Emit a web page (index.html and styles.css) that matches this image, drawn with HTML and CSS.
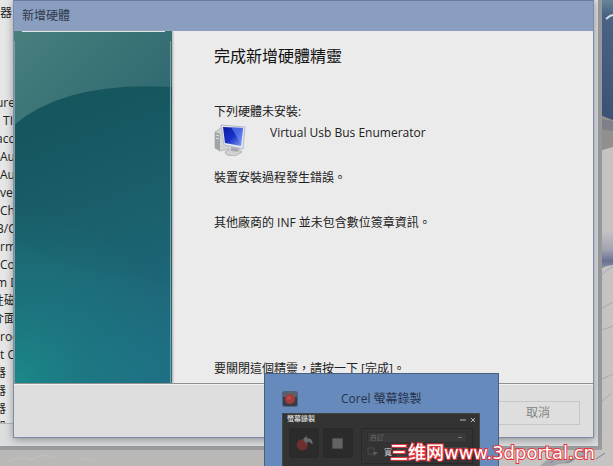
FILE: index.html
```html
<!DOCTYPE html>
<html lang="zh-Hant">
<head>
    <meta charset="UTF-8">
    <meta name="viewport" content="width=device-width, initial-scale=1.0">
    <title>新增硬體</title>
    <link rel="stylesheet" href="styles.css">
</head>
<body>
<div class="desktop">
    <!-- wallpaper -->
    <svg class="wallpaper" viewBox="0 0 613 466" preserveAspectRatio="xMaxYMax slice" aria-hidden="true">
        <defs>
            <linearGradient id="sky" x1="0" y1="0" x2="0" y2="1">
                <stop offset="0" stop-color="#66859a"/>
                <stop offset=".12" stop-color="#4a6384"/>
                <stop offset="1" stop-color="#3c5275"/>
            </linearGradient>
            <linearGradient id="haze" x1="0" y1="0" x2="0" y2="1">
                <stop offset="0" stop-color="#c6c4c2"/>
                <stop offset=".5" stop-color="#a2a3b1"/>
                <stop offset=".8" stop-color="#686f91"/>
                <stop offset="1" stop-color="#9497aa"/>
            </linearGradient>
        </defs>
        <rect width="613" height="466" fill="#c6c4c2"/>
        <rect x="600" width="13" height="120" fill="url(#sky)"/>
        <path d="M606 19l4-3 3-1" stroke="#d5dee3" stroke-width="2" fill="none"/>
        <path d="M600 115l13 5v27l-7 2-6 2z" fill="#92908f"/>
        <path d="M600 119l13 2v10l-13-2z" fill="#7e8089"/>
        <path d="M600 232l13-2v35l-6 1-7 3z" fill="url(#haze)"/>
        <path d="M602 275q4-6 11-8M602 308l11-6M602 330l11-4M602 379l11-5M602 401l9-7" stroke="#aaa9a9" fill="none"/>
        <path d="M540 466l8-7 7 2 5-5 6 3 8-2 4-7 9-3 5 2-5 6-9 2-8 6-11 1-6 2z" fill="#a3a4aa"/>
        <path d="M550 463l6-4m10 4l9-4m8-8l10-4m3 12l9-6" stroke="#7d808a" fill="none"/>
        <path d="M0 450h264v16H0z" fill="#b9b8b7"/>
        <path d="M8 461l14-4 9 3 12-5 14 3M82 458l13 3" stroke="#bebdbc" stroke-width="2" fill="none"/>
    </svg>

    <!-- device list behind the wizard -->
    <section class="back-window">
        <ul class="device-list">
            <li>器</li>
            <li></li>
            <li></li>
            <li></li>
            <li></li>
            <li class="cut">ure</li>
            <li>&nbsp;TII</li>
            <li class="cut">acc</li>
            <li>Au</li>
            <li>Au</li>
            <li>ve</li>
            <li>Ch</li>
            <li class="cut">B/C</li>
            <li>rm</li>
            <li>Co</li>
            <li class="cut">m D</li>
            <li class="half">性磁</li>
            <li class="half">介面</li>
            <li>roc</li>
            <li>t C</li>
            <li class="half">器</li>
            <li class="half">器</li>
            <li class="half">器</li>
            <li class="half">器</li>
        </ul>
    </section>

    <!-- wizard -->
    <section class="wizard">
        <header class="wizard-title">新增硬體</header>
        <div class="wizard-body">
            <svg class="banner" viewBox="0 0 159 352" preserveAspectRatio="none" aria-hidden="true">
                <defs>
                    <linearGradient id="top" x1="0" y1="0" x2="1" y2="1">
                        <stop offset="0" stop-color="#47807d"/>
                        <stop offset="1" stop-color="#265e6b"/>
                    </linearGradient>
                    <linearGradient id="sea" x1=".3" y1="0" x2=".5" y2="1">
                        <stop offset="0" stop-color="#15545b"/>
                        <stop offset=".5" stop-color="#1a606c"/>
                        <stop offset="1" stop-color="#1f6b82"/>
                    </linearGradient>
                    <radialGradient id="glow" gradientUnits="userSpaceOnUse" cx="5" cy="350" r="170">
                        <stop offset="0" stop-color="#1b8789"/>
                        <stop offset=".4" stop-color="#1b8284" stop-opacity=".5"/>
                        <stop offset="1" stop-color="#1b8284" stop-opacity="0"/>
                    </radialGradient>
                </defs>
                <rect width="159" height="160" fill="url(#top)"/>
                <path d="M0 94Q52 50 159 56V352H0z" fill="url(#sea)"/>
                <path d="M0 207Q38 239 159 252V352H0z" fill="#268290" opacity=".1"/>
                <rect width="159" height="352" fill="url(#glow)"/>
                <path d="M8 0.5H152" stroke="#dce9ea"/>
                <path d="M0.5 10V352M157.5 10V352" stroke="#7ca0a5"/>
            </svg>
            <main class="wizard-content">
                <h1>完成新增硬體精靈</h1>
                <p>下列硬體未安裝:</p>
                <div class="device">
                    <svg class="computer" viewBox="0 0 32 32" aria-hidden="true">
                        <defs>
                            <linearGradient id="screen" x1="0" y1="0" x2="1" y2="1">
                                <stop offset="0" stop-color="#0a1a9c"/>
                                <stop offset=".5" stop-color="#1730c8"/>
                                <stop offset="1" stop-color="#8ba7f3"/>
                            </linearGradient>
                        </defs>
                        <path d="M1 8l7-5 7 2v20L6 27l-5-3z" fill="#d0d2d2" stroke="#b6b9ba"/>
                        <path d="M1 8l5 2v17l-5-3z" fill="#a0a4a5"/>
                        <path d="M2 11l3 1M2 14l3 1" stroke="#e2e6e6"/>
                        <path d="M11 28l6-3 9 1 2 2-7 4-8-1z" fill="#d0d2d4" stroke="#b0b3b6"/>
                        <path d="M17 23l8 1-1 4-7-1z" fill="#a8abad"/>
                        <path d="M7 1l24 2-2 22-19-4z" fill="#e3e6ef" stroke="#b4bacb"/>
                        <path d="M9 3l20 1-2 18-16-3z" fill="url(#screen)"/>
                        <path d="M17 3l12 1-2 16z" fill="#7598ff" opacity=".55"/>
                    </svg>
                    <span>Virtual Usb Bus Enumerator</span>
                </div>
                <p class="result">裝置安裝過程發生錯誤。</p>
                <p class="reason">其他廠商的 INF 並未包含數位簽章資訊。</p>
                <p class="hint">要關閉這個精靈，請按一下 [完成]。</p>
            </main>
        </div>
        <footer class="wizard-footer">
            <button class="cancel" type="button" disabled>取消</button>
        </footer>
    </section>

    <!-- taskbar preview of the recorder -->
    <section class="preview">
        <header class="preview-title">
            <svg class="app-icon" viewBox="0 0 16 16" aria-hidden="true">
                <rect x="0.5" y="0.5" width="15" height="15" rx="2" fill="#363d49" stroke="#54627c"/>
                <rect x="1" y="1" width="14" height="5" rx="1" fill="#59616e"/>
                <circle cx="8" cy="8" r="5" fill="#a33b3c"/>
                <circle cx="7" cy="7" r="2" fill="#b84a49"/>
            </svg>
            <span>Corel 螢幕錄製</span>
        </header>
        <div class="recorder">
            <div class="recorder-bar">
                <span>螢幕錄製</span>
                <svg viewBox="0 0 20 8" aria-hidden="true">
                    <path d="M1 4h6M12 2l4 4M16 2l-4 4" stroke="#b9b9b9" fill="none"/>
                </svg>
            </div>
            <div class="recorder-body">
                <button class="tool" type="button" aria-label="錄製">
                    <svg viewBox="0 0 30 30" aria-hidden="true">
                        <circle cx="13" cy="17" r="6" fill="#6c3031"/>
                        <path d="M14 11l4-4v3q7-1 6 7-2-4-6-3v3z" fill="#686a6b"/>
                    </svg>
                </button>
                <button class="tool" type="button" aria-label="停止">
                    <svg viewBox="0 0 30 30" aria-hidden="true">
                        <rect x="9" y="10" width="11" height="11" fill="#626262"/>
                    </svg>
                </button>
                <div class="options">
                    <select aria-label="大小">
                        <option>自訂</option>
                    </select>
                    <div class="size-row">
                        <svg viewBox="0 0 12 10" aria-hidden="true">
                            <path d="M1 1h6v6H1z" stroke="#4c4c4c" fill="none"/>
                            <path d="M6 5h5l-4 4z" fill="#5c5c5c"/>
                        </svg>
                        <label for="rec-width">寬</label>
                        <input id="rec-width" type="text">
                    </div>
                </div>
            </div>
        </div>
    </section>

    <div class="watermark"><span>三维网</span><a href="#">www.3dportal.cn</a></div>
</div>
</body>
</html>
```

FILE: styles.css
```css
* {
    box-sizing: border-box;
}
body {
    margin: 0;
    font-family: "Open Sans", "Noto Sans CJK TC", sans-serif;
    font-size: 12px;
    line-height: 18px;
    color: #222;
}
h1, p, ul {
    margin: 0;
    padding: 0;
}
.desktop {
    position: relative;
    height: 100vh;
    overflow: hidden;
    background: #c6c4c2;
}
.wallpaper {
    position: absolute;
    width: 100%;
    height: 100%;
}

/* window behind */
.back-window {
    position: absolute;
    inset: 0 11px 16px 0;
    padding: 0 8px 22px 0;
    background: #dcdddf;
    border-right: 4px solid #999b9e;
    border-bottom: 4px solid #999b9c;
}
.device-list {
    height: 100%;
    padding-top: 4px;
    overflow: hidden;
    list-style: none;
    white-space: nowrap;
    background: #e6e6e7;
    border-bottom: 1px solid #b6b8bd;
}
.device-list li {
    height: 18px;
}
.device-list .cut {
    margin-left: -4px;
}
.device-list .half {
    margin-left: -6px;
}
.device-list .half:nth-child(17),
.device-list .half:nth-child(18) {
    margin-left: -8px;
}

/* wizard */
.wizard {
    position: absolute;
    inset: 0 19px 28px 13px;
    display: flex;
    flex-direction: column;
    background: #ebebeb;
    border: 1px solid #7c8ba9;
    border-top-color: #6b7d9f;
    box-shadow: 0 2px 8px rgba(0, 0, 0, 0.35);
}
.wizard-title {
    height: 30px;
    padding: 6px 8px;
    color: #303a4e;
    background: #8a9fc0;
}
.wizard-body {
    display: flex;
    flex: 1;
    min-height: 0;
}
.banner {
    width: 158px;
    height: 100%;
    box-shadow: 1px 0 2px #aaa;
}
.wizard-content {
    display: flex;
    flex: 1;
    flex-direction: column;
    padding: 13px 16px 5px 42px;
}
h1 {
    margin-bottom: 35px;
    font-size: 16px;
    line-height: 24px;
    font-weight: 400;
    color: #111;
}
.device {
    display: flex;
    gap: 24px;
    margin-top: 3px;
}
.computer {
    width: 32px;
    height: 32px;
}
.result {
    margin-top: 13px;
}
.reason {
    margin-top: 27px;
}
.hint {
    margin-top: auto;
}
.wizard-footer {
    display: flex;
    justify-content: flex-end;
    height: 54px;
    padding: 17px 13px;
    background: #dedede;
    border-top: 1px solid #8f9292;
    box-shadow: inset 0 1px #f2f2f2;
}
.cancel {
    width: 84px;
    height: 24px;
    padding: 0;
    font: inherit;
    color: #858585;
    background: #dedede;
    border: 1px solid #c6c6c6;
}

/* recorder preview */
.preview {
    position: absolute;
    top: 373px;
    left: 264px;
    width: 235px;
    padding: 16px 18px 0 17px;
    background: #668abc;
    border: 1px solid #4a607f;
}
.preview-title {
    display: flex;
    align-items: center;
    gap: 43px;
    height: 18px;
    margin-bottom: 5px;
    color: #27344b;
}
.app-icon {
    width: 16px;
    height: 16px;
}
.recorder {
    height: 72px;
    color: #ccc;
    background: #333;
    border: 1px solid #454545;
}
.recorder-bar {
    display: flex;
    justify-content: space-between;
    height: 12px;
    padding: 0 0 0 4px;
    font-size: 7px;
    line-height: 9px;
    font-weight: 700;
}
.recorder-bar svg {
    width: 20px;
    height: 8px;
    margin-top: 2px;
}
.recorder-body {
    display: flex;
    gap: 4px;
    padding: 2px 6px;
}
.tool {
    flex: none;
    width: 30px;
    height: 30px;
    padding: 0;
    background: #2b2b2b;
    border: 1px solid #292929;
    border-radius: 3px;
}
.tool svg {
    display: block;
    width: 28px;
    height: 28px;
}
.options {
    flex: 1;
    min-width: 0;
    height: 36px;
    margin-left: 4px;
    padding: 3px 5px;
    border: 1px solid #292929;
}
.options select {
    display: block;
    width: 100%;
    height: 11px;
    padding: 0 2px;
    appearance: none;
    font-size: 7px;
    line-height: 9px;
    color: #737373;
    background: #3a3a3a linear-gradient(#777, #777) right 4px center / 4px 1px no-repeat;
    border: 1px solid #303030;
}
.size-row {
    display: flex;
    align-items: center;
    gap: 5px;
    margin-top: 4px;
    font-size: 8px;
    line-height: 10px;
}
.size-row svg {
    width: 12px;
    height: 10px;
}
.size-row input {
    flex: 1;
    min-width: 0;
    height: 10px;
    padding: 0;
    background: #3a3a3a;
    border: 1px solid #444;
}

/* watermark */
.watermark {
    position: absolute;
    right: 18px;
    bottom: 3px;
    display: flex;
    align-items: center;
    font-family: "DejaVu Sans", "Noto Sans CJK SC", sans-serif;
    font-size: 18px;
    line-height: 20px;
    font-weight: 400;
    color: #fff;
    -webkit-text-stroke: 2px #e5343b;
    paint-order: stroke fill;
}
.watermark span {
    font-weight: 500;
}
.watermark a {
    color: inherit;
    text-decoration: none;
}
```
